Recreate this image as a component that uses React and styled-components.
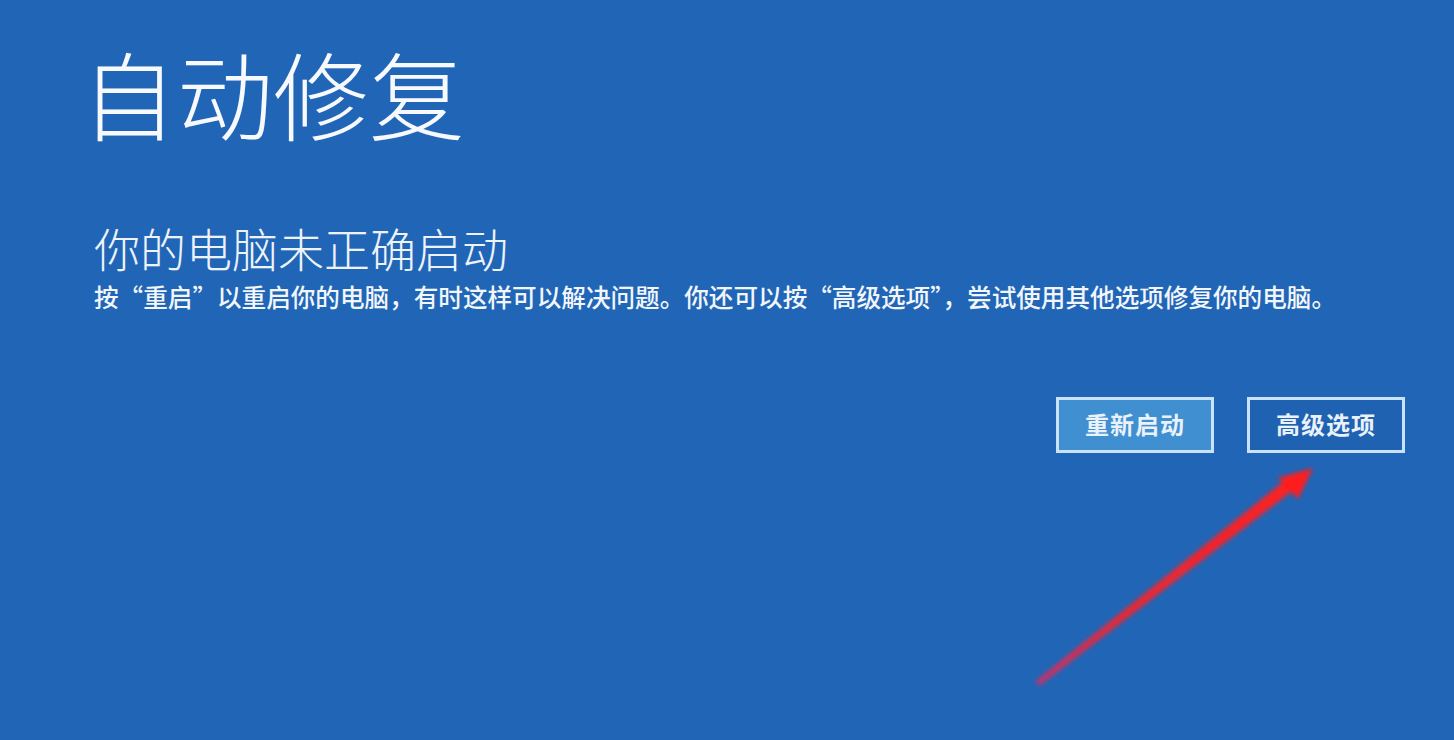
import React from "react";
import styled, { createGlobalStyle } from "styled-components";

const Global = createGlobalStyle`
  html, body { margin: 0; padding: 0; }
  body {
    background: #2166b6;
    font-family: "Noto Sans CJK SC", "Noto Sans", sans-serif;
    color: #f4f7fc;
  }
`;

const Screen = styled.div`
  position: relative;
  width: 1454px;
  height: 740px;
  overflow: hidden;
  background: #2166b6;
  box-sizing: border-box;
  padding: 44px 49px 0 94px;
  display: flex;
  flex-direction: column;
`;

const Title = styled.h1`
  margin: 0 0 0 -13px;
  font-size: 96px;
  line-height: 1;
  font-weight: 300;
  color: #f7f9fd;
`;

const Subtitle = styled.h2`
  margin: 84px 0 0 0;
  font-size: 46px;
  line-height: 1;
  font-weight: 300;
  color: #eef3fa;
`;

const Body = styled.p`
  margin: 12px 0 0 0;
  font-size: 24.6px;
  line-height: 1.2;
  font-weight: 500;
  color: #f2f6fb;
  white-space: nowrap;
`;

const Actions = styled.div`
  margin-top: 85px;
  display: flex;
  justify-content: flex-end;
  gap: 33px;
`;

const Button = styled.button`
  width: 158px;
  height: 56px;
  box-sizing: border-box;
  border: 3px solid #c9e2f6;
  background: ${(p) => (p.$primary ? "#3f8fd1" : "#1f62b2")};
  color: #e9f1fa;
  font-family: "Noto Sans CJK SC", sans-serif;
  font-weight: 700;
  font-size: 24px;
  letter-spacing: 1px;
  display: flex;
  align-items: center;
  justify-content: center;
  padding: 0 0 2px 0;
  cursor: pointer;
`;

const ArrowLayer = styled.svg`
  position: absolute;
  left: 0;
  top: 0;
  pointer-events: none;
`;

export default function App() {
  return (
    <>
      <Global />
      <Screen>
        <Title>自动修复</Title>
        <Subtitle>你的电脑未正确启动</Subtitle>
        <Body>
          按“重启”以重启你的电脑，有时这样可以解决问题。你还可以按“高级选项”，尝试使用其他选项修复你的电脑。
        </Body>
        <Actions>
          <Button $primary>重新启动</Button>
          <Button>高级选项</Button>
        </Actions>
        <ArrowLayer width="1454" height="740" viewBox="0 0 1454 740">
          <defs>
            <filter id="blur" x="-10%" y="-10%" width="120%" height="120%">
              <feGaussianBlur stdDeviation="2" />
            </filter>
            <linearGradient id="fade" x1="1037" y1="683" x2="1310" y2="470" gradientUnits="userSpaceOnUse">
              <stop offset="0" stopColor="#c8306a" />
              <stop offset="0.3" stopColor="#e62834" />
              <stop offset="1" stopColor="#ff1f1f" />
            </linearGradient>
          </defs>
          <g filter="url(#blur)">
            <polygon points="1036,681 1039,686 1296,488 1288,478" fill="url(#fade)" />
            <polygon points="1313,468 1278,478 1298,499" fill="#ff1f1f" />
          </g>
        </ArrowLayer>
      </Screen>
    </>
  );
}
